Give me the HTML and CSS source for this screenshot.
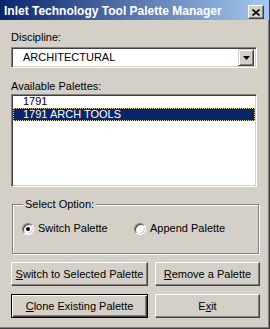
FILE: index.html
```html
<!DOCTYPE html>
<html lang="en">
<head>
  <meta charset="UTF-8" />
  <title>Inlet Technology Tool Palette Manager</title>
  <link rel="stylesheet" href="styles.css">
</head>
<body>

  <div class="window">
    <div class="titlebar">
      <span class="title">Inlet Technology Tool Palette Manager</span>
      <span class="close">
        <svg width="8" height="7" viewBox="0 0 8 7"><path d="M0.5 0.5 L7.5 6.5 M7.5 0.5 L0.5 6.5" stroke="#000" stroke-width="1.6" fill="none"/></svg>
      </span>
    </div>

    <div class="content">
      <!-- Discipline -->
      <div class="label">Discipline:</div>
      <div class="combo">
        <span class="combo-text">ARCHITECTURAL</span>
        <span class="combo-btn">
          <svg width="7" height="4" viewBox="0 0 7 4"><path d="M0 0 H7 L3.5 4 Z" fill="#000"/></svg>
        </span>
      </div>

      <!-- Palettes -->
      <div class="label label-list">Available Palettes:</div>
      <ul class="listbox">
        <li>1791</li>
        <li class="selected">1791 ARCH TOOLS</li>
      </ul>

      <!-- Options -->
      <fieldset class="group">
        <legend>Select Option:</legend>
        <div class="options">
          <label class="option"><span class="radio checked"></span>Switch Palette</label>
          <label class="option"><span class="radio"></span>Append Palette</label>
        </div>
      </fieldset>

      <div class="buttons">
        <button class="btn"><u>S</u>witch to Selected Palette</button>
        <button class="btn"><u>R</u>emove a Palette</button>
        <button class="btn default"><u>C</u>lone Existing Palette</button>
        <button class="btn">E<u>x</u>it</button>
      </div>
    </div>
  </div>

</body>
</html>
```

FILE: styles.css
```css
body {
  margin: 0;
  background: #d4d0c8;
  font-family: 'Liberation Sans', Arial, sans-serif;
  font-size: 11px;
  color: #000;
}
.window {
  width: 270px;
  height: 329px;
  box-sizing: border-box;
  border-right: 1px solid #404040;
  border-bottom: 1px solid #404040;
  box-shadow: inset -1px -1px #808080;
  overflow: hidden;
}
.titlebar {
  height: 20px;
  display: flex;
  justify-content: space-between;
  align-items: flex-start;
  padding: 0 5px 0 4px;
  background: linear-gradient(to right, #0a246a, #a6caf0);
}
.title {
  color: #fff;
  font-weight: bold;
  font-size: 12px;
  line-height: 14px;
  padding-top: 4px;
}
.close {
  width: 16px;
  height: 14px;
  margin-top: 5px;
  box-sizing: border-box;
  display: flex;
  align-items: center;
  justify-content: center;
  background: #d4d0c8;
  border: 1px solid;
  border-color: #fff #404040 #404040 #fff;
  box-shadow: inset -1px -1px #808080;
}
.content {
  padding: 11px 12px 0 11px;
}
.label {
  line-height: 13px;
}
.label-list {
  margin-top: 12px;
}
.combo {
  margin-top: 3px;
  height: 21px;
  box-sizing: border-box;
  display: flex;
  align-items: center;
  justify-content: space-between;
  background: #fff;
  border: 1px solid;
  border-color: #808080 #fff #fff #808080;
  box-shadow: inset 1px 1px #404040, inset -1px -1px #d4d0c8;
  padding: 2px;
}
.combo-text {
  padding-left: 9px;
  line-height: 13px;
}
.combo-btn {
  width: 16px;
  height: 17px;
  box-sizing: border-box;
  display: flex;
  align-items: center;
  justify-content: center;
  background: #d4d0c8;
  border: 1px solid;
  border-color: #d4d0c8 #404040 #404040 #d4d0c8;
  box-shadow: inset 1px 1px #fff, inset -1px -1px #808080;
}
.listbox {
  list-style: none;
  margin: 1px 0 0;
  padding: 0 1px;
  height: 93px;
  box-sizing: border-box;
  background: #fff;
  border: 1px solid;
  border-color: #808080 #fff #fff #808080;
  box-shadow: inset 1px 1px #404040, inset -1px -1px #d4d0c8;
}
.listbox li {
  height: 13px;
  line-height: 13px;
  padding-left: 10px;
  box-sizing: border-box;
}
.listbox li.selected {
  background: #0a246a;
  color: #fff;
  border: 1px dotted #d8d0a0;
  padding-left: 9px;
  line-height: 11px;
}
.group {
  margin: 11px 0 0 1px;
  width: 247px;
  box-sizing: border-box;
  padding: 12px 0 18px 9px;
  border: 1px solid #808080;
  box-shadow: inset 1px 1px #fff, 1px 1px #fff;
}
.group legend {
  margin-left: 1px;
  padding: 0 2px;
  line-height: 12px;
  background: #d4d0c8;
}
.options {
  display: grid;
  grid-template-columns: 112px auto;
}
.option {
  display: flex;
  align-items: center;
  line-height: 13px;
}
.radio {
  position: relative;
  width: 12px;
  height: 12px;
  margin-right: 4px;
  box-sizing: border-box;
  border-radius: 50%;
  background: #fff;
  border: 1px solid;
  border-color: #808080 #fff #fff #808080;
  box-shadow: inset 1px 1px #404040, inset -1px -1px #d4d0c8;
}
.radio.checked::after {
  content: '';
  position: absolute;
  left: 3px;
  top: 3px;
  width: 4px;
  height: 4px;
  border-radius: 50%;
  background: #000;
}
.buttons {
  margin-top: 8px;
  display: grid;
  grid-template-columns: 137px 105px;
  grid-auto-rows: 24px;
  column-gap: 7px;
  row-gap: 8px;
}
.btn {
  font-family: inherit;
  font-size: 11px;
  color: #000;
  padding: 0;
  background: #d4d0c8;
  border: 1px solid;
  border-color: #fff #404040 #404040 #fff;
  box-shadow: inset -1px -1px #808080;
}
.btn.default {
  border-color: #000;
  box-shadow: inset 1px 1px #fff, inset -1px -1px #404040, inset -2px -2px #808080;
}
```
